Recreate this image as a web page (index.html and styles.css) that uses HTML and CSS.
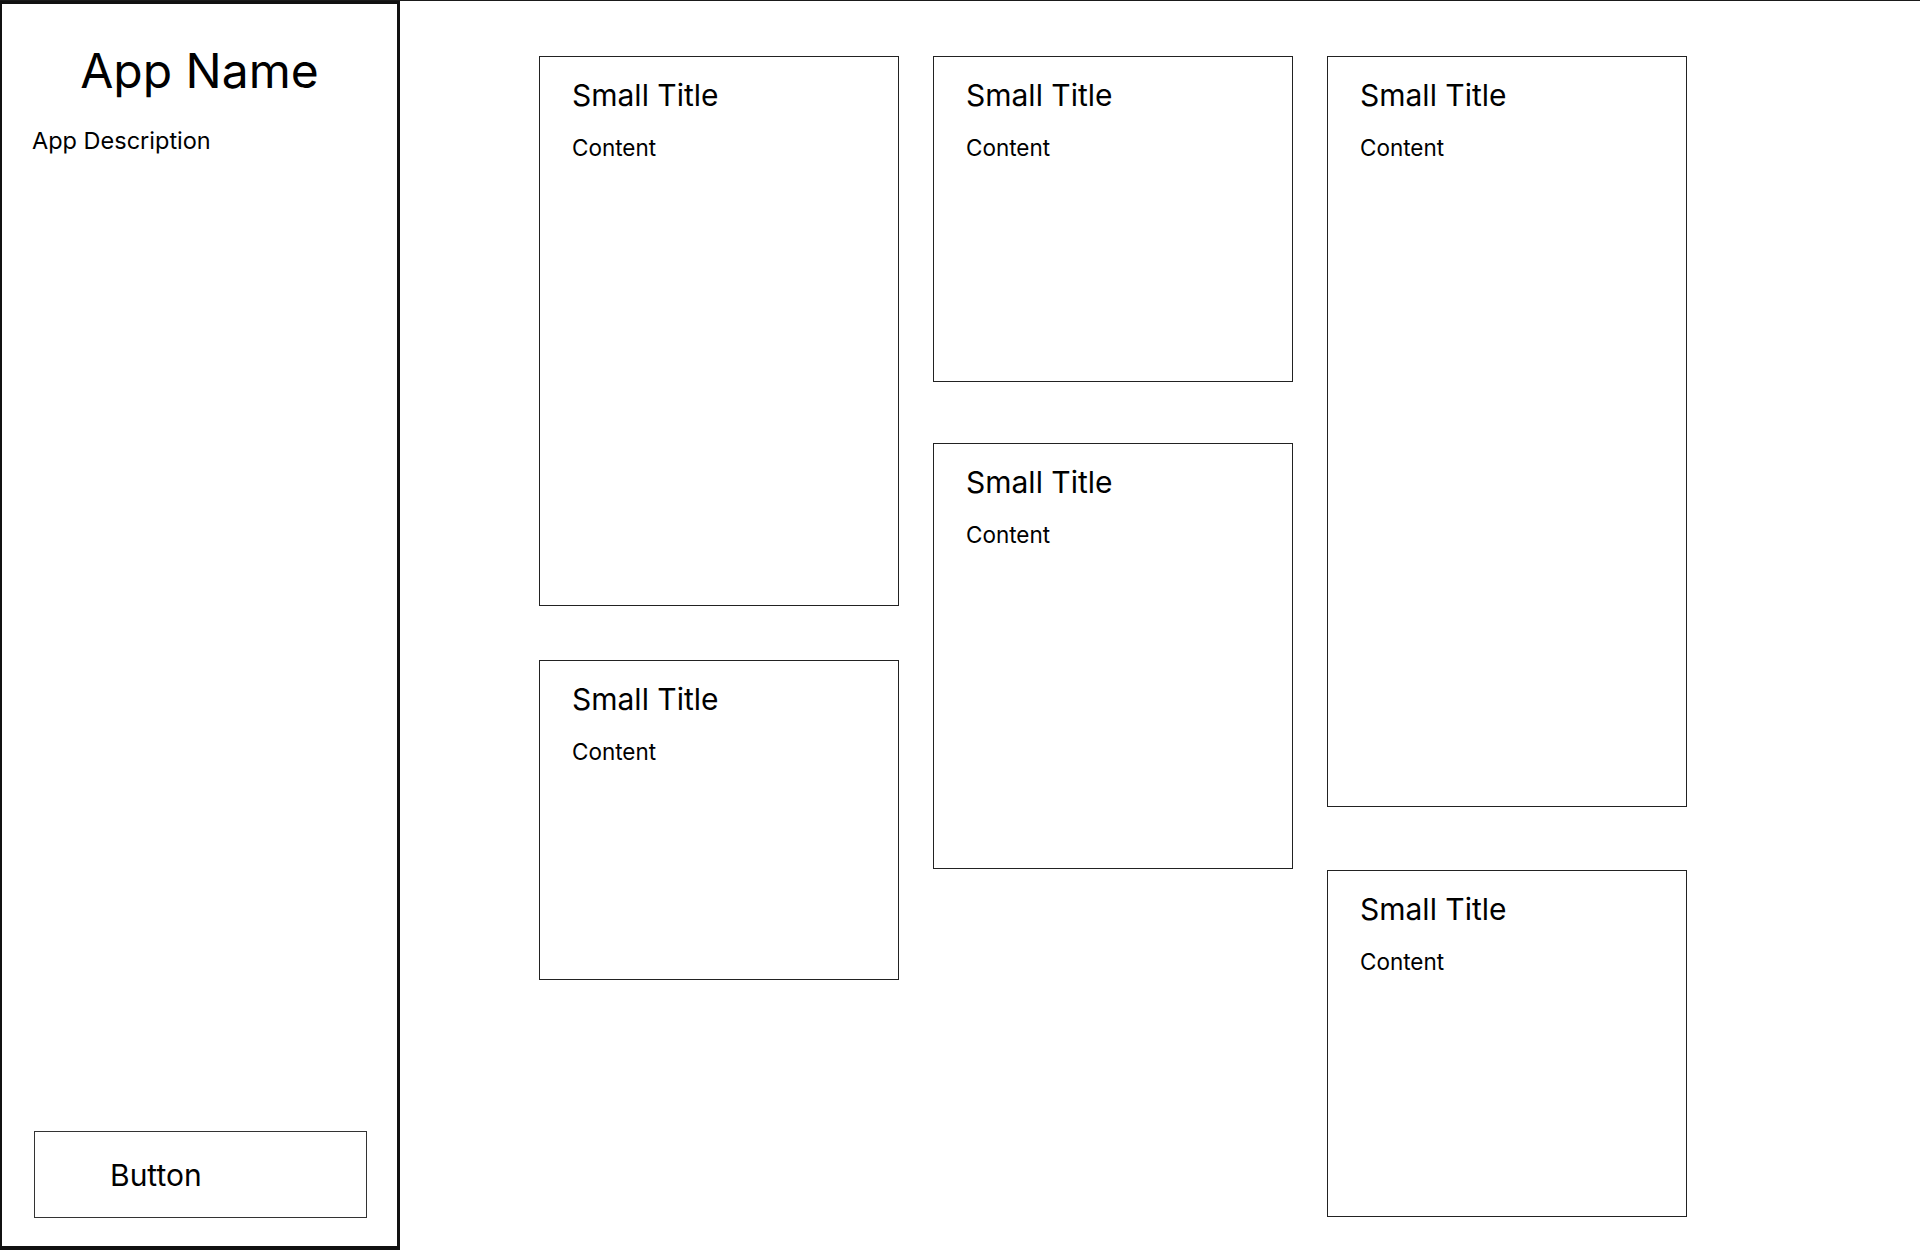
FILE: index.html
```html
<!DOCTYPE html>
<html lang="en">
<head>
<meta charset="utf-8">
<title>App Name</title>
<link rel="stylesheet" href="styles.css">
</head>
<body>
<div class="app">
  <aside class="sidebar">
    <h1 class="app-name">App Name</h1>
    <p class="app-desc">App Description</p>
    <div class="spacer"></div>
    <button class="btn" type="button">Button</button>
  </aside>
  <main class="board">
    <div class="col col-1">
      <section class="card h-550"><h2 class="card-title">Small Title</h2><p class="card-text">Content</p></section>
      <section class="card h-320"><h2 class="card-title">Small Title</h2><p class="card-text">Content</p></section>
    </div>
    <div class="col col-2">
      <section class="card h-326"><h2 class="card-title">Small Title</h2><p class="card-text">Content</p></section>
      <section class="card h-426"><h2 class="card-title">Small Title</h2><p class="card-text">Content</p></section>
    </div>
    <div class="col col-3">
      <section class="card h-751"><h2 class="card-title">Small Title</h2><p class="card-text">Content</p></section>
      <section class="card h-347"><h2 class="card-title">Small Title</h2><p class="card-text">Content</p></section>
    </div>
  </main>
</div>
</body>
</html>
```

FILE: styles.css
```css
* { box-sizing: border-box; }
html, body { margin: 0; padding: 0; background: #fff; }
body {
  font-family: Inter, "Noto Sans", "Liberation Sans", sans-serif;
  color: #000;
  width: 1920px;
  height: 1250px;
  overflow: hidden;
}
.app {
  display: flex;
  height: 1250px;
  border-top: 1px solid #1a1a1a;
}
.sidebar {
  width: 400px;
  flex: 0 0 400px;
  height: 1249px;
  border-style: solid;
  border-color: #111;
  border-width: 3px 3px 4px 2px;
  display: flex;
  flex-direction: column;
  padding: 38px 30px 28px 30px;
}
.app-name {
  margin: 0;
  font-weight: 400;
  font-size: 48px;
  line-height: 58px;
  text-align: center;
}
.app-desc {
  margin: 27px 0 0 0;
  font-size: 23.5px;
  line-height: 28px;
}
.spacer { flex: 1; }
.btn {
  width: 333px;
  height: 87px;
  margin-left: 2px;
  background: #fff;
  border: 1px solid #333;
  font-family: inherit;
  font-size: 30px;
  color: #000;
  text-align: left;
  padding: 0 0 0 75px;
  border-radius: 0;
}
.board {
  flex: 1;
  display: flex;
  align-items: flex-start;
  gap: 34px;
  padding: 55px 0 0 139px;
}
.col {
  width: 360px;
  display: flex;
  flex-direction: column;
}
.col-1 { gap: 54px; }
.col-2 { gap: 61px; }
.col-3 { gap: 63px; }
.card {
  width: 360px;
  border: 1px solid #222;
  padding: 20px 32px;
}
.h-550 { height: 550px; }
.h-320 { height: 320px; }
.h-326 { height: 326px; }
.h-426 { height: 426px; }
.h-751 { height: 751px; }
.h-347 { height: 347px; }
.card-title {
  margin: 0;
  font-weight: 400;
  font-size: 30px;
  line-height: 36px;
}
.card-text {
  margin: 21px 0 0 0;
  font-size: 22.5px;
  line-height: 27px;
}
```
